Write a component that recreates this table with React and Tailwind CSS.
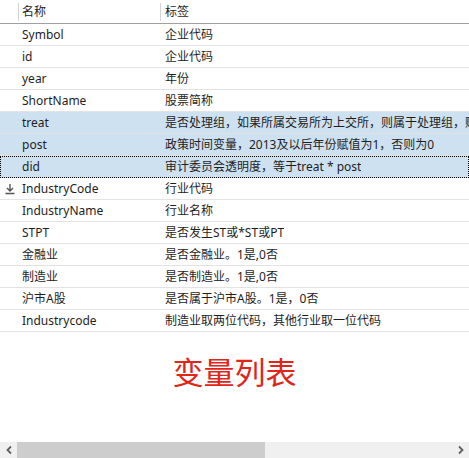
import React from "react";

const rows = [
  { name: "Symbol", label: "企业代码" },
  { name: "id", label: "企业代码" },
  { name: "year", label: "年份" },
  { name: "ShortName", label: "股票简称" },
  { name: "treat", label: "是否处理组，如果所属交易所为上交所，则属于处理组，赋值为1，否则为0", selected: true },
  { name: "post", label: "政策时间变量，2013及以后年份赋值为1，否则为0", selected: true },
  { name: "did", label: "审计委员会透明度，等于treat * post", selected: true, focus: true },
  { name: "IndustryCode", label: "行业代码", key: true },
  { name: "IndustryName", label: "行业名称" },
  { name: "STPT", label: "是否发生ST或*ST或PT" },
  { name: "金融业", label: "是否金融业。1是,0否" },
  { name: "制造业", label: "是否制造业。1是,0否" },
  { name: "沪市A股", label: "是否属于沪市A股。1是，0否" },
  { name: "Industrycode", label: "制造业取两位代码，其他行业取一位代码" },
];

const App = () => {
  return (
    <div
      className="w-[469px] h-[458px] bg-white overflow-hidden flex flex-col text-[12px] text-[#1e1e1e]"
      style={{ fontFamily: '"Noto Sans", "Noto Sans CJK SC", sans-serif' }}
    >
      {/* HEADER */}
      <div className="flex h-[24px] shrink-0 border-b border-[#a0a0a0] items-center">
        <div className="w-[19px] h-[18px] border-r border-[#d5d5d5]" />
        <div className="w-[142px] h-[18px] pl-[3px] border-r border-[#d5d5d5] flex items-center">名称</div>
        <div className="pl-[4px] flex items-center">标签</div>
      </div>

      {/* ROWS */}
      <div className="flex flex-col shrink-0">
        {rows.map((r) => (
          <div
            key={r.name}
            className={`flex h-[22px] items-center whitespace-nowrap overflow-hidden ${
              r.selected ? "bg-[#cde1f1]" : "bg-white"
            } ${
              r.focus
                ? "border-b border-transparent outline-1 outline-dotted outline-black -outline-offset-1"
                : "border-b border-[#e3e3e3]"
            }`}
          >
            <div className="w-[22px] shrink-0 flex justify-center">
              {r.key && (
                <svg width="12" height="12" viewBox="0 0 12 12" className="ml-[-3px]">
                  <path d="M6 1v7M3 5l3 3 3-3M1.5 10.5h9" stroke="#555" strokeWidth="1.4" fill="none" />
                </svg>
              )}
            </div>
            <div className="w-[143px] shrink-0">{r.name}</div>
            <div className="min-w-0 overflow-hidden">{r.label}</div>
          </div>
        ))}
      </div>

      {/* TITLE */}
      <div className="flex-1 flex justify-center pt-[20px]">
        <span className="text-[31px] leading-[40px] text-[#e0251b] h-fit">变量列表</span>
      </div>

      {/* SCROLLBAR */}
      <div className="h-[16px] shrink-0 bg-[#f0f0f0] flex items-center">
        <div className="w-[17px] flex justify-center">
          <svg width="8" height="10" viewBox="0 0 8 10">
            <path d="M6 1.5L2.5 5 6 8.5" stroke="#606060" strokeWidth="1.8" fill="none" />
          </svg>
        </div>
        <div className="w-[248px] h-full bg-[#cdcdcd]" />
        <div className="flex-1" />
        <div className="w-[17px] flex justify-center">
          <svg width="8" height="10" viewBox="0 0 8 10">
            <path d="M2 1.5L5.5 5 2 8.5" stroke="#606060" strokeWidth="1.8" fill="none" />
          </svg>
        </div>
      </div>
    </div>
  );
};

export default App;
